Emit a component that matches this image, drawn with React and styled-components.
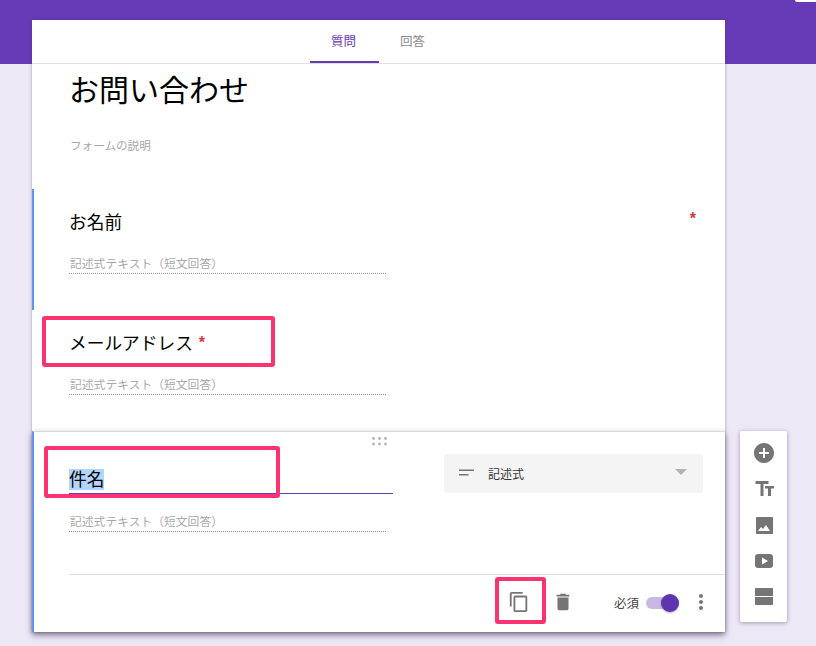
import React from "react";
import styled, { createGlobalStyle } from "styled-components";

const Global = createGlobalStyle`
  html, body { margin: 0; padding: 0; height: 646px; overflow: hidden; }
  body { font-family: "Noto Sans CJK JP", "Liberation Sans", sans-serif; }
`;

const Page = styled.div`
  position: relative;
  height: 646px;
  box-sizing: border-box;
  padding: 20px 0 0 32px;
  display: flex;
  align-items: flex-start;
  gap: 15px;
  overflow: hidden;
  background: linear-gradient(#673ab7 64px, #ede7f6 64px);
`;

const CornerTab = styled.div`
  position: absolute;
  top: 0;
  right: 0;
  width: 21px;
  height: 2px;
  background: #fff;
  border-bottom-left-radius: 2px;
`;

const Column = styled.main`
  width: 693px;
  flex: none;
  background: #fff;
  box-shadow: 0 0 3px rgba(60, 50, 90, 0.4);
`;

const Tabs = styled.nav`
  height: 43px;
  border-bottom: 1px solid #e0e0e0;
  display: flex;
  justify-content: center;
`;

const Tab = styled.div`
  width: 69px;
  height: 43px;
  box-sizing: border-box;
  margin-right: ${(p) => (p.$active ? "-1px" : "0")};
  padding-right: ${(p) => (p.$active ? "2px" : "0")};
  display: flex;
  align-items: center;
  justify-content: center;
  font-size: 12.5px;
  color: ${(p) => (p.$active ? "#673ab7" : "#8a8a8a")};
  border-bottom: 2px solid ${(p) => (p.$active ? "#673ab7" : "transparent")};
`;

const Header = styled.section`
  height: 125px;
  box-sizing: border-box;
  padding: 4px 0 0 37px;
`;

const FormTitle = styled.h1`
  margin: 0;
  font-size: 30px;
  font-weight: 400;
  line-height: 40px;
  color: #000;
`;

const FormDesc = styled.div`
  margin: 29px 0 0 1px;
  font-size: 11.6px;
  line-height: 16px;
  color: #a6a6a6;
`;

const Question = styled.section`
  position: relative;
  height: 121px;
  box-sizing: border-box;
  padding: 20px 0 0 36px;
  border-left: 2px solid ${(p) => (p.$marked ? "#5c94ee" : "transparent")};
`;

const Label = styled.div`
  font-size: 17.7px;
  line-height: 24px;
  color: #000;
  margin-left: -1px;
`;

const Star = styled.span`
  color: #d2383f;
  font-family: "Liberation Sans", sans-serif;
  font-weight: 700;
  font-size: 16px;
  line-height: 14px;
  vertical-align: 2px;
  margin-left: 6px;
`;

const CornerStar = styled.span`
  position: absolute;
  top: 23px;
  right: 29px;
  color: #d2383f;
  font-family: "Liberation Sans", sans-serif;
  font-weight: 700;
  font-size: 16px;
  line-height: 14px;
`;

const Hint = styled.div`
  width: 317px;
  box-sizing: border-box;
  margin-top: 22px;
  height: 19px;
  margin-left: -1px;
  padding-left: 1px;
  font-size: 11.8px;
  line-height: 16px;
  color: #a8a8a8;
  border-bottom: 1px dotted #8c8c8c;
`;

const ActiveCard = styled.section`
  position: relative;
  height: 201px;
  box-sizing: border-box;
  background: #fff;
  border-left: 2px solid #5c94ee;
  border-top: 1px solid #d8d8d8;
  box-shadow: 0 3px 6px rgba(40, 30, 60, 0.55);
`;

const Handle = styled.div`
  height: 22px;
  box-sizing: border-box;
  padding-top: 5px;
  display: flex;
  justify-content: center;
`;

const TitleRow = styled.div`
  display: flex;
  align-items: flex-start;
  padding-left: 35px;
`;

const TitleField = styled.div`
  width: 324px;
  height: 40px;
  box-sizing: border-box;
  padding-top: 15px;
  border-bottom: 1px solid #673ab7;
  font-size: 17.7px;
  line-height: 21px;
  color: #000;
`;

const Selected = styled.span`
  display: block;
  width: max-content;
  background: #b3d4fc;
  height: 21px;
  line-height: 19px;
`;

const TypeSelect = styled.div`
  margin-left: 51px;
  width: 259px;
  height: 39px;
  box-sizing: border-box;
  background: #f4f4f4;
  border-radius: 3px;
  display: flex;
  align-items: center;
  padding: 0 16px 0 14px;
  font-size: 12px;
  color: #333;
`;

const TypeName = styled.span`
  margin-left: 14px;
  flex: 1;
`;

const AnswerHint = styled.div`
  margin: 19px 0 0 35px;
  width: 317px;
  box-sizing: border-box;
  height: 19px;
  padding-left: 1px;
  font-size: 11.8px;
  line-height: 16px;
  color: #a8a8a8;
  border-bottom: 1px dotted #8c8c8c;
`;

const Footer = styled.div`
  margin: 42px 0 0 35px;
  height: 57px;
  box-sizing: border-box;
  border-top: 1px solid #dedede;
  display: flex;
  align-items: center;
  padding-bottom: 3px;
  color: #757575;
`;

const FooterIcons = styled.div`
  margin-left: 439px;
  display: flex;
  align-items: center;
  gap: 22px;
`;

const RequiredLabel = styled.span`
  margin: 2px 0 0 40px;
  font-size: 12.5px;
  color: #444;
`;

const Toggle = styled.div`
  position: relative;
  margin: 3px 0 0 7px;
  width: 33px;
  height: 12px;
  border-radius: 6px;
  background: #c9b8e6;
`;

const Thumb = styled.div`
  position: absolute;
  top: -3px;
  right: 0;
  width: 18px;
  height: 18px;
  border-radius: 50%;
  background: #5e35b1;
  box-shadow: 0 1px 2px rgba(0, 0, 0, 0.3);
`;

const MoreIcon = styled.div`
  margin-left: 10px;
  display: flex;
`;

const Toolbar = styled.aside`
  margin-top: 411px;
  width: 47px;
  height: 191px;
  flex: none;
  background: #fff;
  border-radius: 2px;
  box-shadow: 0 1px 4px rgba(40, 30, 60, 0.4);
  display: flex;
  flex-direction: column;
  align-items: center;
  padding-top: 10px;
  box-sizing: border-box;
  gap: 12px;
  color: #757575;
`;

const Highlight = styled.div`
  position: absolute;
  left: ${(p) => p.$x}px;
  top: ${(p) => p.$y}px;
  width: ${(p) => p.$w}px;
  height: ${(p) => p.$h}px;
  box-sizing: border-box;
  border: 4px solid #fb3370;
  border-radius: 3px;
  pointer-events: none;
`;

const Icon = ({ d, size = 24 }) => (
  <svg width={size} height={size} viewBox="0 0 24 24" fill="currentColor" style={{ display: "block" }}>
    <path d={d} fillRule="evenodd" />
  </svg>
);

const Dots = () => (
  <svg width="15" height="9" viewBox="0 0 15 9" fill="#b5b5b5" style={{ display: "block" }}>
    {[1.5, 7.5, 13.5].flatMap((x) =>
      [1.5, 7].map((y) => <circle key={`${x}-${y}`} cx={x} cy={y} r="1.4" />)
    )}
  </svg>
);

const ShortTextIcon = () => (
  <svg width="15" height="8" viewBox="0 0 15 8" fill="#757575" style={{ display: "block", marginLeft: 1, marginTop: -1 }}>
    <rect x="0" y="0.5" width="15" height="1.5" />
    <rect x="0" y="5" width="9.5" height="1.5" />
  </svg>
);

const Caret = () => (
  <svg width="12" height="6" viewBox="0 0 12 6" fill="#b4b4b4" style={{ display: "block", marginTop: -4 }}>
    <path d="M0 0h12L6 6z" />
  </svg>
);

const paths = {
  add: "M12 2C6.48 2 2 6.48 2 12s4.48 10 10 10 10-4.48 10-10S17.52 2 12 2zm5 11h-4v4h-2v-4H7v-2h4V7h2v4h4v2z",
  text: "M3.5 4v3h5v12h3V7h5V4zM22 9h-9v2.500h3V19h3v-7.500h3z",
  image: "M5 4h15c.6 0 1 .4 1 1v15c0 .6-.4 1-1 1H5c-.6 0-1-.4-1-1V5c0-.6.4-1 1-1zM6 18l3-4 2 2 3-4 4 6z",
  video: "M6 5h12c1.700 0 3 1.300 3 3v8c0 1.700-1.300 3-3 3H6c-1.700 0-3-1.300-3-3V8c0-1.700 1.300-3 3-3zm4 3.500v7l6-3.500z",
  section: "M4 3h16c.6 0 1 .4 1 1v7H3V4c0-.6.4-1 1-1zM3 12h18v7c0 .6-.4 1-1 1H4c-.6 0-1-.4-1-1z",
  copy: "M16 1H4c-1.100 0-2 .9-2 2v14h2V3h12V1zm3 4H8c-1.100 0-2 .9-2 2v14c0 1.100.9 2 2 2h11c1.100 0 2-.9 2-2V7c0-1.100-.9-2-2-2zm0 16H8V7h11v14z",
  trash: "M6 19c0 1.100.9 2 2 2h8c1.100 0 2-.9 2-2V7H6v12zM19 4h-3.500l-1-1h-5l-1 1H5v2h14V4z",
  more: "M12 8c1.100 0 2-.9 2-2s-.9-2-2-2-2 .9-2 2 .9 2 2 2zm0 2c-1.100 0-2 .9-2 2s.9 2 2 2 2-.9 2-2-.9-2-2-2zm0 6c-1.100 0-2 .9-2 2s.9 2 2 2 2-.9 2-2-.9-2-2-2z",
};

export default function App() {
  return (
    <Page>
      <Global />
      <CornerTab />
      <Column>
        <Tabs>
          <Tab $active>質問</Tab>
          <Tab>回答</Tab>
        </Tabs>
        <Header>
          <FormTitle>お問い合わせ</FormTitle>
          <FormDesc>フォームの説明</FormDesc>
        </Header>
        <Question $marked>
          <Label>お名前</Label>
          <CornerStar>*</CornerStar>
          <Hint>記述式テキスト（短文回答）</Hint>
        </Question>
        <Question>
          <Label>
            メールアドレス<Star>*</Star>
          </Label>
          <Hint>記述式テキスト（短文回答）</Hint>
        </Question>
        <ActiveCard>
          <Handle>
            <Dots />
          </Handle>
          <TitleRow>
            <TitleField>
              <Selected>件名</Selected>
            </TitleField>
            <TypeSelect>
              <ShortTextIcon />
              <TypeName>記述式</TypeName>
              <Caret />
            </TypeSelect>
          </TitleRow>
          <AnswerHint>記述式テキスト（短文回答）</AnswerHint>
          <Footer>
            <FooterIcons>
              <Icon d={paths.copy} size={22} />
              <Icon d={paths.trash} size={22} />
            </FooterIcons>
            <RequiredLabel>必須</RequiredLabel>
            <Toggle>
              <Thumb />
            </Toggle>
            <MoreIcon>
              <Icon d={paths.more} size={24} />
            </MoreIcon>
          </Footer>
        </ActiveCard>
      </Column>
      <Toolbar>
        <Icon d={paths.add} />
        <Icon d={paths.text} />
        <Icon d={paths.image} />
        <Icon d={paths.video} />
        <Icon d={paths.section} />
      </Toolbar>
      <Highlight $x={42} $y={316} $w={233} $h={51} />
      <Highlight $x={44} $y={446} $w={236} $h={52} />
      <Highlight $x={495} $y={577} $w={51} $h={47} />
    </Page>
  );
}
